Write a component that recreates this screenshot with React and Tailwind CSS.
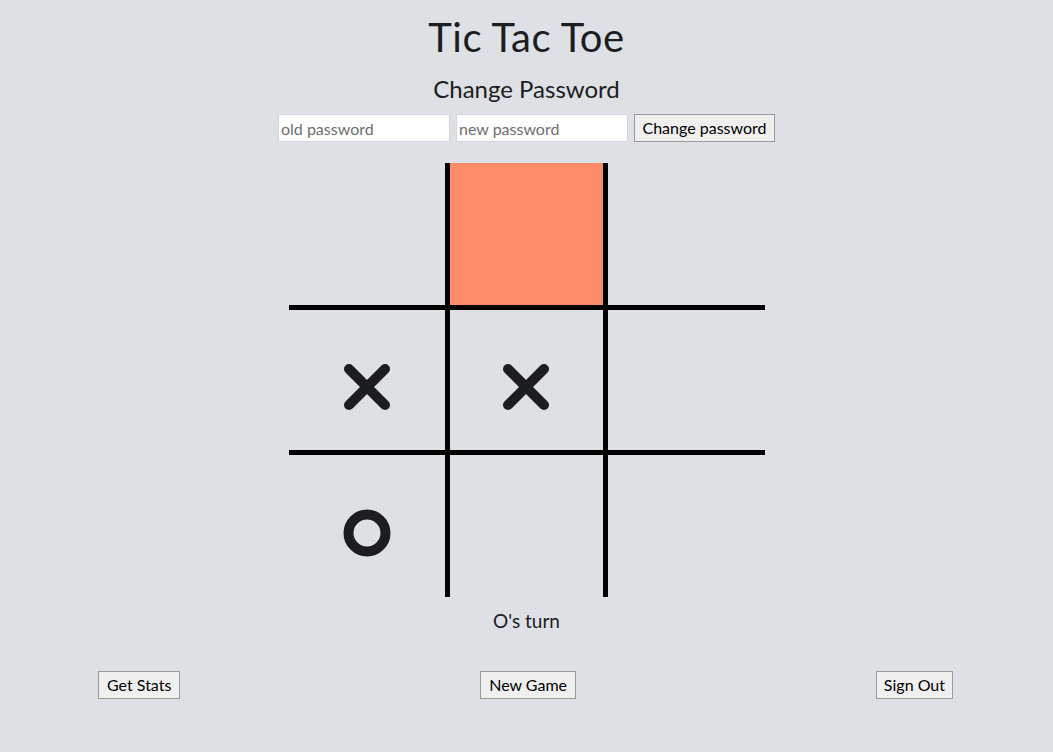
import { useState } from "react";

function XMark() {
  return (
    <svg width="48" height="48" viewBox="0 0 48 48">
      <path
        d="M6 6 L42 42 M42 6 L6 42"
        stroke="#1b1d20"
        strokeWidth="10"
        strokeLinecap="round"
        fill="none"
      />
    </svg>
  );
}

function OMark() {
  return (
    <svg width="48" height="48" viewBox="0 0 48 48">
      <circle cx="24" cy="24" r="18.5" stroke="#1b1d20" strokeWidth="10" fill="none" />
    </svg>
  );
}

const INITIAL = [null, null, null, "x", "x", null, "o", null, null];

export default function App() {
  const [board] = useState(INITIAL);
  const highlight = 1;

  return (
    <div className="min-h-[752px] bg-[#dde0e4] text-[#1b1d20] font-['Lato','Open_Sans',sans-serif] flex flex-col items-center">
      <h1 className="text-[40px] leading-none mt-[17px] tracking-[0.5px]">Tic Tac Toe</h1>
      <h2 className="text-[24px] leading-none mt-[20px]">Change Password</h2>

      {/* Change password form */}
      <div className="flex gap-[6px] mt-[13px]">
        <input
          type="password"
          placeholder="old password"
          className="w-[172px] h-[28px] bg-white border border-[#d4d6d9] px-[2px] text-[16px] placeholder:text-[#6e6e6e] outline-none"
        />
        <input
          type="password"
          placeholder="new password"
          className="w-[172px] h-[28px] bg-white border border-[#d4d6d9] px-[2px] text-[16px] placeholder:text-[#6e6e6e] outline-none"
        />
        <button className="w-[141px] h-[28px] bg-[#efefef] border border-[#9a9a9a] text-[16px] text-black">
          Change password
        </button>
      </div>

      {/* Board */}
      <div className="grid grid-cols-[156px_153px_157px] grid-rows-[142px_140px_142px] gap-[5px] bg-black mt-[21px]">
        {board.map((cell, i) => (
          <div
            key={i}
            className={
              i === highlight
                ? "bg-[#ff8c69] flex items-center justify-center pt-[14px]"
                : "bg-[#dde0e4] flex items-center justify-center pt-[14px]"
            }
          >
            {cell === "x" && <XMark />}
            {cell === "o" && <OMark />}
          </div>
        ))}
      </div>

      <p className="text-[19px] leading-none mt-[14px]">O's turn</p>

      {/* Bottom actions */}
      <div className="w-full flex justify-between items-center pl-[98px] pr-[100px] mt-[41px]">
        <button className="h-[28px] px-[8px] bg-[#efefef] border border-[#9a9a9a] text-[16px] text-black">
          Get Stats
        </button>
        <button className="h-[28px] px-[8px] bg-[#efefef] border border-[#9a9a9a] text-[16px] text-black">
          New Game
        </button>
        <button className="h-[28px] px-[7px] bg-[#efefef] border border-[#9a9a9a] text-[16px] text-black">
          Sign Out
        </button>
      </div>
    </div>
  );
}
